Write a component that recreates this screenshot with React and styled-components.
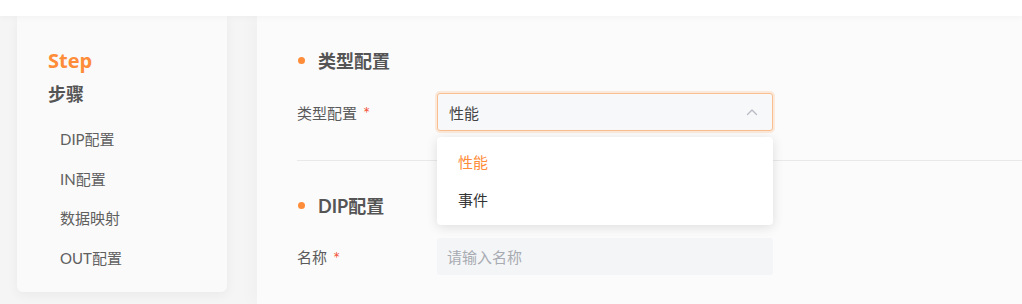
import React from 'react';
import styled, { createGlobalStyle } from 'styled-components';

const GlobalStyle = createGlobalStyle`
    html, body {
        margin: 0;
        padding: 0;
        background: #f5f5f5;
        font-family: Lato, "Noto Sans CJK SC", sans-serif;
    }
`;

const steps = ['DIP配置', 'IN配置', '数据映射', 'OUT配置'];
const typeOptions = [
    { label: '性能', active: true },
    { label: '事件', active: false },
];

function ChevronUp() {
    return (
        <svg width="12" height="8" viewBox="0 0 12 8" fill="none">
            <path d="M1.5 6.5L6 2l4.5 4.5" stroke="#b8bcc4" strokeWidth="1.4" strokeLinecap="round" strokeLinejoin="round" />
        </svg>
    );
}

function App() {
    return (
        <Page>
            <GlobalStyle />
            <TopBar />
            <Body>
                <StepCard>
                    <StepTitle>Step</StepTitle>
                    <StepSubtitle>步骤</StepSubtitle>
                    <StepList>
                        {steps.map(s => <StepItem key={s}>{s}</StepItem>)}
                    </StepList>
                </StepCard>
                <Panel>
                    <Section>
                        <SectionHeading>类型配置</SectionHeading>
                        <FormRow>
                            <Label>类型配置<Required>*</Required></Label>
                            <SelectWrap>
                                <SelectBox>
                                    <span>性能</span>
                                    <ChevronUp />
                                </SelectBox>
                                <Dropdown>
                                    {typeOptions.map(o => (
                                        <Option key={o.label} $active={o.active}>{o.label}</Option>
                                    ))}
                                </Dropdown>
                            </SelectWrap>
                        </FormRow>
                    </Section>
                    <Section>
                        <SectionHeading>DIP配置</SectionHeading>
                        <FormRow>
                            <Label>名称<Required>*</Required></Label>
                            <Input placeholder="请输入名称" />
                        </FormRow>
                    </Section>
                </Panel>
            </Body>
        </Page>
    );
}

export default App;

const Page = styled.div`
    width: 1022px;
    height: 304px;
    overflow: hidden;
    display: flex;
    flex-direction: column;
`;

const TopBar = styled.div`
    height: 16px;
    flex-shrink: 0;
    background: #ffffff;
    box-shadow: 0 2px 6px rgba(0, 0, 0, 0.03);
    position: relative;
    z-index: 1;
`;

const Body = styled.div`
    flex: 1;
    display: flex;
    gap: 30px;
    padding-left: 17px;
    min-height: 0;
`;

const StepCard = styled.div`
    width: 210px;
    height: 276px;
    box-sizing: border-box;
    flex-shrink: 0;
    background: #fafafa;
    border-radius: 0 0 6px 6px;
    box-shadow: 0 3px 12px rgba(0, 0, 0, 0.05);
    padding: 32px 0 0 31px;
`;

const StepTitle = styled.div`
    font-family: "Open Sans", "Noto Sans CJK SC", sans-serif;
    font-size: 20px;
    font-weight: 700;
    line-height: 26px;
    color: #ff8c38;
`;

const StepSubtitle = styled.div`
    font-size: 18px;
    font-weight: 700;
    line-height: 26px;
    color: #555555;
    margin-top: 7px;
`;

const StepList = styled.div`
    display: flex;
    flex-direction: column;
    padding-left: 12px;
    margin-top: 12px;
`;

const StepItem = styled.div`
    height: 39.7px;
    line-height: 40px;
    font-size: 15px;
    color: #606060;
`;

const Panel = styled.div`
    flex: 1;
    background: #fbfbfb;
    box-shadow: -6px 0 14px rgba(0, 0, 0, 0.025);
    padding-left: 40px;
`;

const Section = styled.div`
    padding: 31px 0 29px;
    border-bottom: 1px solid #e9e9e9;

    &:last-child {
        border-bottom: none;
    }
`;

const SectionHeading = styled.div`
    display: flex;
    align-items: center;
    height: 26px;
    font-size: 18px;
    font-weight: 700;
    color: #555555;
    margin-bottom: 20px;

    &::before {
        content: '';
        width: 7px;
        height: 7px;
        border-radius: 50%;
        background: #ff8c38;
        margin: 0 13px 0 1px;
    }
`;

const FormRow = styled.div`
    display: flex;
    align-items: center;
`;

const Label = styled.div`
    width: 140px;
    font-size: 15px;
    color: #5a5a5a;
    display: flex;
    align-items: center;
`;

const Required = styled.span`
    color: #f2553a;
    margin-left: 6px;
    font-size: 17px;
    line-height: 1;
    padding-top: 3px;
`;

const SelectWrap = styled.div`
    position: relative;
    width: 336px;
`;

const SelectBox = styled.div`
    height: 38px;
    box-sizing: border-box;
    display: flex;
    align-items: center;
    justify-content: space-between;
    padding: 0 14px 0 11px;
    background: #f7f8fa;
    border: 1px solid #fbbf8f;
    border-radius: 3px;
    box-shadow: 0 0 0 2px rgba(255, 140, 56, 0.16);
    font-size: 15px;
    color: #444444;
`;

const Dropdown = styled.div`
    position: absolute;
    top: 44px;
    left: 0;
    right: 0;
    background: #ffffff;
    border-radius: 4px;
    box-shadow: 0 2px 12px rgba(0, 0, 0, 0.12);
    padding: 6px 0;
    z-index: 5;
`;

const Option = styled.div`
    height: 38px;
    line-height: 38px;
    padding-left: 21px;
    font-size: 15px;
    color: ${p => (p.$active ? '#ff8c38' : '#333333')};
`;

const Input = styled.input`
    width: 336px;
    height: 37px;
    box-sizing: border-box;
    border: none;
    outline: none;
    border-radius: 3px;
    background: #f4f5f7;
    padding: 0 10px;
    font-family: Lato, "Noto Sans CJK SC", sans-serif;
    font-size: 15px;
    color: #333333;

    &::placeholder {
        color: #a8abb2;
    }
`;
